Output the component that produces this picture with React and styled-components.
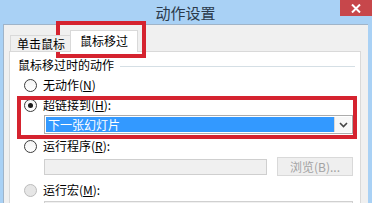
import React from "react";
import styled, { createGlobalStyle } from "styled-components";

const Global = createGlobalStyle`
  html, body {
    margin: 0;
    padding: 0;
    background: #a9d1f5;
  }
  * {
    box-sizing: border-box;
  }
`;

const Frame = styled.div`
  position: relative;
  width: 372px;
  height: 203px;
  overflow: hidden;
  padding: 0 4px 0 3px;
  background: #a9d1f5;
  font-family: "Noto Sans CJK SC", "Noto Sans", sans-serif;
  font-size: 12px;
  color: #000;
  display: flex;
  flex-direction: column;
`;

const TitleBar = styled.div`
  height: 24px;
  flex: none;
  display: flex;
  align-items: center;
  justify-content: center;
  font-size: 15px;
  color: #2b3a4b;
  padding-top: 1px;
`;

const CloseBtn = styled.div`
  position: absolute;
  top: 0;
  right: 0;
  width: 32px;
  height: 16px;
  background: #c7474b;
  display: flex;
  align-items: center;
  justify-content: center;
`;

const Body = styled.div`
  flex: 1;
  background: #f0f0f0;
  border-left: 1px solid #9fb4c9;
  border-top: 1px solid #9fb4c9;
  padding: 5px 7px 0 5px;
  display: flex;
  flex-direction: column;
`;

const TabRow = styled.div`
  display: flex;
  align-items: flex-end;
  height: 22px;
  padding-left: 1px;
  margin-bottom: -1px;
  position: relative;
  z-index: 1;
`;

const Tab = styled.div`
  height: ${(p) => (p.$active ? "22px" : "17px")};
  padding: ${(p) => (p.$active ? "3px 9px 0 9px" : "1px 6px 0 6px")};
  margin-left: ${(p) => (p.$active ? "-2px" : "0")};
  background: ${(p) => (p.$active ? "#fff" : "#f0f0f0")};
  border: 1px solid #d9d9d9;
  border-bottom: ${(p) => (p.$active ? "none" : "1px solid #d9d9d9")};
  line-height: 14px;
  font-size: 12px;
  white-space: nowrap;
  ${(p) => p.$active && "position: relative; z-index: 2;"}
`;

const Panel = styled.div`
  flex: 1;
  background: #fff;
  border: 1px solid #d9d9d9;
  border-bottom: none;
  padding: 6px 5px 0 9px;
  display: flex;
  flex-direction: column;
`;

const GroupHead = styled.div`
  display: flex;
  align-items: center;
  height: 14px;
  line-height: 14px;
  margin-left: -1px;
`;

const GroupLine = styled.div`
  flex: 1;
  height: 1px;
  margin-left: 6px;
  margin-top: 2px;
  background: #d5dfe5;
  border-right: 1px solid #d5dfe5;
`;

const Option = styled.div`
  display: flex;
  align-items: center;
  height: 14px;
  line-height: 14px;
  margin-left: 5px;
  margin-top: ${(p) => p.$top || 6}px;
  color: ${(p) => (p.$disabled ? "#6d6d6d" : "#000")};
`;

const Radio = styled.span`
  width: 13px;
  height: 13px;
  border-radius: 50%;
  border: 1px solid ${(p) => (p.$disabled ? "#bcbcbc" : "#3c3c3c")};
  background: ${(p) => (p.$disabled ? "#e6e6e6" : "linear-gradient(#f4f4f4, #fff)")};
  margin-right: 6px;
  display: flex;
  align-items: center;
  justify-content: center;
  flex: none;
  &::after {
    content: "";
    width: 5px;
    height: 5px;
    border-radius: 50%;
    background: ${(p) => (p.$checked ? "#1a1a1a" : "transparent")};
  }
`;

const Indent = styled.div`
  display: flex;
  align-items: center;
  gap: 10px;
  margin-left: 25px;
  margin-top: ${(p) => p.$top || 5}px;
  margin-right: 2px;
`;

const Combo = styled.div`
  flex: 1;
  height: 19px;
  display: flex;
  border: 1px solid ${(p) => (p.$disabled ? "#d0d0d0" : "#acacac")};
  background: ${(p) => (p.$disabled ? "#f0f0f0" : "#fff")};
  padding: 1px;
`;

const ComboValue = styled.div`
  flex: 1;
  background: #3399ff;
  color: #fff;
  line-height: 15px;
  padding-left: 2px;
  white-space: nowrap;
`;

const ComboArrow = styled.div`
  width: 17px;
  flex: none;
  display: flex;
  align-items: center;
  justify-content: center;
  border-left: 1px solid #d9d9d9;
  background: #f7f7f7;
`;

const TextBox = styled.div`
  width: 223px;
  height: 16px;
  flex: none;
  border: 1px solid #cfcfcf;
  background: #f0f0f0;
`;

const Button = styled.div`
  flex: 1;
  height: 19px;
  margin-top: -1px;
  border: 1px solid #d9d9d9;
  background: #efefef;
  color: #a3a3a3;
  line-height: 17px;
  text-align: center;
  white-space: nowrap;
`;

/* red annotation boxes drawn over the dialog */
const Mark = styled.div`
  position: absolute;
  left: ${(p) => p.$x}px;
  top: ${(p) => p.$y}px;
  width: ${(p) => p.$w}px;
  height: ${(p) => p.$h}px;
  border: 4px solid #d5232f;
  pointer-events: none;
`;

const Chevron = () => (
  <svg width="9" height="6" viewBox="0 0 9 6">
    <path d="M1 1 L4.5 4.5 L8 1" fill="none" stroke="#444" strokeWidth="1.6" />
  </svg>
);

export default function App() {
  return (
    <Frame>
      <Global />
      <TitleBar>动作设置</TitleBar>
      <CloseBtn>
        <svg width="10" height="9" viewBox="0 0 10 9">
          <path d="M1 0.5 L9 8.5 M9 0.5 L1 8.5" stroke="#fff" strokeWidth="2" />
        </svg>
      </CloseBtn>
      <Body>
        <TabRow>
          <Tab>单击鼠标</Tab>
          <Tab $active>鼠标移过</Tab>
        </TabRow>
        <Panel>
          <GroupHead>
            鼠标移过时的动作
            <GroupLine />
          </GroupHead>
          <Option $top={6}>
            <Radio />
            无动作(<u>N</u>)
          </Option>
          <Option>
            <Radio $checked />
            超链接到(<u>H</u>):
          </Option>
          <Indent $top={3}>
            <Combo>
              <ComboValue>下一张幻灯片</ComboValue>
              <ComboArrow>
                <Chevron />
              </ComboArrow>
            </Combo>
          </Indent>
          <Option $top={5}>
            <Radio />
            运行程序(<u>R</u>):
          </Option>
          <Indent $top={5}>
            <TextBox />
            <Button>浏览(B)...</Button>
          </Indent>
          <Option $top={7}>
            <Radio $disabled />
            运行宏(<u>M</u>):
          </Option>
          <Indent $top={4}>
            <Combo $disabled />
          </Indent>
        </Panel>
      </Body>
      <Mark $x={56} $y={21} $w={90} $h={37} />
      <Mark $x={17} $y={96} $w={340} $h={43} />
    </Frame>
  );
}
